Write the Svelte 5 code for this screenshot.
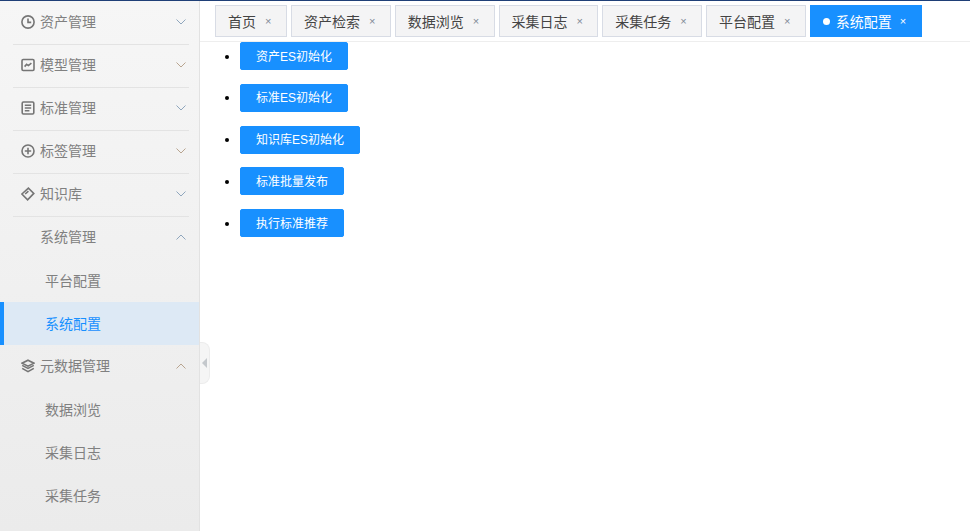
<script>
	const menus = [
		{ name: '资产管理', icon: 'clock', arrow: 'blue' },
		{ name: '模型管理', icon: 'chart', arrow: 'tan' },
		{ name: '标准管理', icon: 'doc', arrow: 'blue' },
		{ name: '标签管理', icon: 'plus', arrow: 'tan' },
		{ name: '知识库', icon: 'tag', arrow: 'blue' },
		{
			name: '系统管理',
			icon: '',
			arrow: 'blue',
			open: true,
			children: [{ name: '平台配置' }, { name: '系统配置', active: true }]
		},
		{
			name: '元数据管理',
			icon: 'layers',
			arrow: 'tan',
			open: true,
			children: [{ name: '数据浏览' }, { name: '采集日志' }, { name: '采集任务' }]
		}
	];

	const tabs = ['首页', '资产检索', '数据浏览', '采集日志', '采集任务', '平台配置', '系统配置'];
	const actions = ['资产ES初始化', '标准ES初始化', '知识库ES初始化', '标准批量发布', '执行标准推荐'];
</script>

<div class="page">
	<aside class="sidebar">
		{#each menus as menu}
			<div class="menu" class:open={menu.open}>
				<div class="menu-title">
					<span class="icon">
						{#if menu.icon === 'clock'}
							<svg viewBox="0 0 14 14" width="14" height="14"><circle cx="7" cy="7" r="6.1" /><path d="M7 3.4V7.4H10.2" /></svg>
						{:else if menu.icon === 'chart'}
							<svg viewBox="0 0 14 14" width="14" height="14"><rect x="1" y="1.5" width="12" height="11" rx="1.2" /><path d="M3.6 8.6L5.6 6.4L7.4 7.6L10.4 5.2" /></svg>
						{:else if menu.icon === 'doc'}
							<svg viewBox="0 0 14 14" width="14" height="14"><rect x="1.2" y="1" width="11.6" height="12" rx="1.2" /><path d="M3.8 4.2H10.2M3.8 7H10.2M3.8 9.8H8.4" /></svg>
						{:else if menu.icon === 'plus'}
							<svg viewBox="0 0 14 14" width="14" height="14"><circle cx="7" cy="7" r="6" /><path d="M7 3.8V10.2M3.8 7H10.2" /></svg>
						{:else if menu.icon === 'tag'}
							<svg viewBox="0 0 14 14" width="14" height="14"><path d="M0.9 7L7.4 1.2L12.8 6.4L6.6 12.8Z" /><path d="M4.2 7L7.4 4.2" /></svg>
						{:else if menu.icon === 'layers'}
							<svg viewBox="0 0 14 14" width="14" height="14"><path d="M7 1.2L13 4.2L7 7.2L1 4.2Z" /><path d="M1.2 6.4L7 9.4L12.8 6.4" /><path d="M1.2 9.4L7 12.6L12.8 9.4" /></svg>
						{/if}
					</span>
					<span class="name">{menu.name}</span>
					<svg class="chevron {menu.arrow}" viewBox="0 0 10 6" width="10" height="6">
						{#if menu.open}
							<path d="M0.5 5.5L5 1L9.5 5.5" />
						{:else}
							<path d="M0.5 0.5L5 5L9.5 0.5" />
						{/if}
					</svg>
				</div>
				{#if menu.children}
					{#each menu.children as child}
						<div class="menu-child" class:active={child.active}>{child.name}</div>
					{/each}
				{/if}
			</div>
		{/each}
	</aside>

	<div class="collapse"><i></i></div>

	<main class="main">
		<nav class="tabs">
			{#each tabs as tab, i}
				<div class="tab" class:current={i === tabs.length - 1}>
					{#if i === tabs.length - 1}<i class="dot"></i>{/if}
					<span>{tab}</span>
					<b>×</b>
				</div>
			{/each}
		</nav>
		<ul class="actions">
			{#each actions as action}
				<li><button type="button">{action}</button></li>
			{/each}
		</ul>
	</main>
</div>

<style>
	:global(body) {
		margin: 0;
		background: #fff;
		overflow: hidden;
	}

	.page {
		position: relative;
		display: flex;
		width: 970px;
		height: 531px;
		box-sizing: border-box;
		border-top: 1px solid #1f3f77;
		font-family: 'Liberation Sans', 'Noto Sans CJK SC', sans-serif;
		overflow: hidden;
	}

	.sidebar {
		width: 200px;
		flex: none;
		box-sizing: border-box;
		padding-top: 1px;
		border-right: 1px solid #e2e2e2;
		background: linear-gradient(180deg, #f6f6f6 0%, #ebebeb 100%);
	}

	.menu-title {
		display: flex;
		align-items: center;
		height: 43px;
		margin: 0 10px 0 13px;
		box-sizing: border-box;
		padding-bottom: 2px;
		border-bottom: 1px solid #e3e3e3;
		font-size: 14px;
		color: #808080;
	}

	.menu.open .menu-title {
		height: 42px;
		padding-bottom: 3px;
		border-bottom: 0;
	}

	.menu.open:last-child .menu-title {
		height: 43px;
		padding-bottom: 2px;
	}

	.icon {
		display: flex;
		width: 14px;
		height: 14px;
		margin: 0 5px 0 8px;
	}

	.icon svg {
		fill: none;
		stroke: #757575;
		stroke-width: 1.6;
	}

	.name {
		padding-bottom: 2px;
	}

	.chevron {
		margin-left: auto;
		margin-right: 3px;
		fill: none;
		stroke-width: 1;
	}

	.chevron.blue {
		stroke: #8fa6bd;
	}

	.chevron.tan {
		stroke: #b8a48f;
	}

	.menu-child {
		height: 43px;
		padding-left: 45px;
		box-sizing: border-box;
		line-height: 45px;
		font-size: 14px;
		color: #808080;
	}

	.menu-child.active {
		padding-left: 41px;
		border-left: 4px solid #1890ff;
		background: #dde9f5;
		color: #1890ff;
	}

	.collapse {
		position: absolute;
		left: 200px;
		top: 341px;
		display: flex;
		align-items: center;
		width: 10px;
		height: 42px;
		box-sizing: border-box;
		border: 1px solid #ececec;
		border-left: 0;
		border-radius: 0 8px 8px 0;
		background: #f5f5f5;
	}

	.collapse i {
		margin-left: 2px;
		border: 5px solid transparent;
		border-left: 0;
		border-right-color: #c4c8cc;
	}

	.main {
		flex: 1;
		min-width: 0;
	}

	.tabs {
		display: flex;
		gap: 4px;
		height: 41px;
		box-sizing: border-box;
		padding: 4px 0 0 15px;
		border-bottom: 1px solid #eee;
	}

	.tab {
		display: flex;
		flex: none;
		align-items: center;
		height: 32px;
		box-sizing: border-box;
		padding: 0 13.75px 0 12px;
		border: 1px solid #d8dce5;
		background: #f4f4f5;
		font-size: 14px;
		color: #444;
	}

	.tab:first-child {
		padding-right: 14px;
	}

	.tab b {
		flex: none;
		margin-left: 9px;
		width: 7px;
		font-weight: 400;
		font-size: 11px;
		color: #808a96;
	}

	.tab.current {
		border-color: #1890ff;
		background: #1890ff;
		color: #fff;
		padding-right: 14px;
	}

	.tab.current b {
		margin-left: 8px;
		color: #fff;
	}

	.dot {
		flex: none;
		width: 7px;
		height: 7px;
		margin: 0 6px 0 0;
		border-radius: 50%;
		background: #fff;
	}

	.actions {
		margin: 0;
		padding: 0 0 0 40px;
	}

	.actions li {
		height: 28px;
		margin-bottom: 13.75px;
		font-size: 13px;
	}

	.actions button {
		height: 28px;
		padding: 0 15px 2px;
		border: 1px solid #1890ff;
		border-radius: 2px;
		background: #1890ff;
		font-family: inherit;
		font-size: 12px;
		color: #fff;
	}
</style>
